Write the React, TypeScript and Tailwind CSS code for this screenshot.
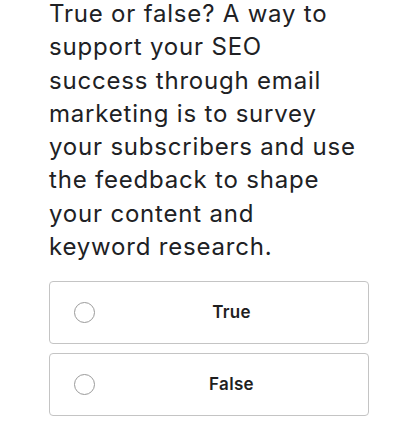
import React from "react";

function Option({ label }: { label: string }) {
  return (
    <div className="flex items-center h-[63px] rounded-[4px] border border-[#c4c4c4] pl-[24px] bg-white">
      <div className="w-[21px] h-[21px] rounded-full border border-[#9a9a9a] shrink-0" />
      <div className="flex-1 text-center text-[17px] font-semibold text-[#1f1f1f] tracking-[0.3px]" style={{ fontFamily: "Inter, sans-serif" }}>
        {label}
      </div>
    </div>
  );
}

const lines = [
  "True or false? A way to",
  "support your SEO",
  "success through email",
  "marketing is to survey",
  "your subscribers and use",
  "the feedback to shape",
  "your content and",
  "keyword research.",
];

export default function App() {
  return (
    <div className="w-[417px] h-[444px] bg-white overflow-hidden">
      <div className="pl-[49px] pr-[48px] mt-[-3px]">
        <p
          className="text-[24px] leading-[33.3px] text-[#202124] whitespace-nowrap tracking-[0.8px]"
          style={{ fontFamily: "Inter, sans-serif" }}
        >
          {lines.map((l, i) => (
            <span key={i} className="block">{l}</span>
          ))}
        </p>
        <div className="mt-[18px] flex flex-col gap-[9px]">
          <Option label="True" />
          <Option label="False" />
        </div>
      </div>
    </div>
  );
}
